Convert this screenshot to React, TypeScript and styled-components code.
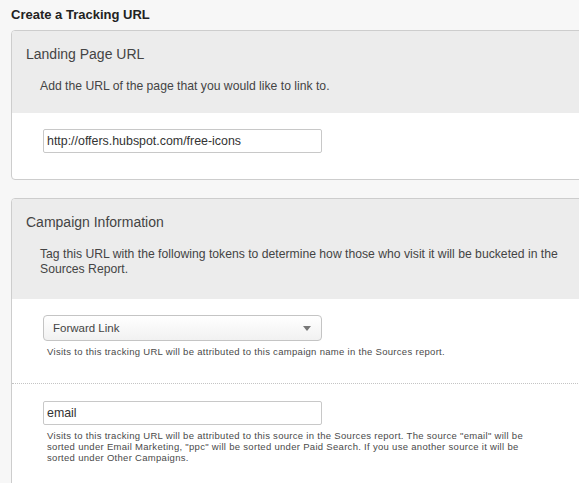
import React from 'react'
import styled, { createGlobalStyle } from 'styled-components'

const GlobalStyle = createGlobalStyle`
  html, body {
    margin: 0;
    padding: 0;
    background: #f7f7f7;
    overflow: hidden;
  }
  body {
    font-family: "Liberation Sans", Arial, sans-serif;
    color: #333;
  }
`

const Page = styled.div`
  padding: 7px 0 0 11px;
  width: 640px;
`

const Heading = styled.h1`
  margin: 0 0 7px;
  font-size: 13px;
  line-height: 16px;
  font-weight: bold;
  color: #222;
`

const Panel = styled.section`
  background: #fff;
  border: 1px solid #cdcdcd;
  border-radius: 4px;
  margin-bottom: 18px;
  overflow: hidden;
`

const PanelHeader = styled.div<{ $bottom: number }>`
  background: #ececec;
  padding: 13px 14px ${(p) => p.$bottom}px;
`

const PanelTitle = styled.h2`
  margin: 0;
  font-size: 14px;
  line-height: 20px;
  font-weight: normal;
  color: #444;
`

const PanelText = styled.p`
  margin: 15px 0 0 14px;
  font-size: 12.2px;
  line-height: 15px;
  color: #444;
  max-width: 535px;
`

const Field = styled.div<{ $top: number; $bottom: number; $divided?: boolean }>`
  padding: ${(p) => p.$top}px 0 ${(p) => p.$bottom}px 31px;
  border-bottom: ${(p) => (p.$divided ? '1px dotted #c4c4c4' : 'none')};
`

const TextInput = styled.input`
  display: block;
  box-sizing: border-box;
  width: 279px;
  height: 24px;
  margin: 0;
  padding: 0 3px;
  border: 1px solid #c8c8c8;
  border-radius: 2px;
  background: #fff;
  font-family: "Liberation Sans", Arial, sans-serif;
  font-size: 12.4px;
  color: #333;
  outline: none;
`

const SelectBox = styled.div`
  box-sizing: border-box;
  width: 279px;
  height: 26px;
  padding: 0 9px;
  display: flex;
  align-items: center;
  border: 1px solid #c4c4c4;
  border-radius: 4px;
  background: linear-gradient(#ffffff, #f1f1f1);
  font-size: 11.5px;
  color: #444;
`

const Caret = styled.span`
  margin-left: auto;
  margin-right: 1px;
  width: 0;
  height: 0;
  border-left: 4.5px solid transparent;
  border-right: 4.5px solid transparent;
  border-top: 5px solid #777;
`

const HelpText = styled.p`
  margin: 5px 0 0 4px;
  font-size: 9.5px;
  line-height: 11px;
  letter-spacing: 0.3px;
  color: #4a4a4a;
  max-width: 482px;
`

export default function App() {
  return (
    <>
      <GlobalStyle />
      <Page>
        <Heading>Create a Tracking URL</Heading>

        <Panel>
          <PanelHeader $bottom={19}>
            <PanelTitle>Landing Page URL</PanelTitle>
            <PanelText>Add the URL of the page that you would like to link to.</PanelText>
          </PanelHeader>
          <Field $top={16} $bottom={26}>
            <TextInput readOnly value="http://offers.hubspot.com/free-icons" />
          </Field>
        </Panel>

        <Panel>
          <PanelHeader $bottom={22}>
            <PanelTitle>Campaign Information</PanelTitle>
            <PanelText>
              Tag this URL with the following tokens to determine how those who visit it will be
              bucketed in the Sources Report.
            </PanelText>
          </PanelHeader>
          <Field $top={16} $bottom={26} $divided>
            <SelectBox>
              Forward Link
              <Caret />
            </SelectBox>
            <HelpText>
              Visits to this tracking URL will be attributed to this campaign name in the Sources
              report.
            </HelpText>
          </Field>
          <Field $top={17} $bottom={30}>
            <TextInput readOnly value="email" />
            <HelpText>
              Visits to this tracking URL will be attributed to this source in the Sources report.
              The source "email" will be sorted under Email Marketing, "ppc" will be sorted under
              Paid Search. If you use another source it will be sorted under Other Campaigns.
            </HelpText>
          </Field>
        </Panel>
      </Page>
    </>
  )
}
